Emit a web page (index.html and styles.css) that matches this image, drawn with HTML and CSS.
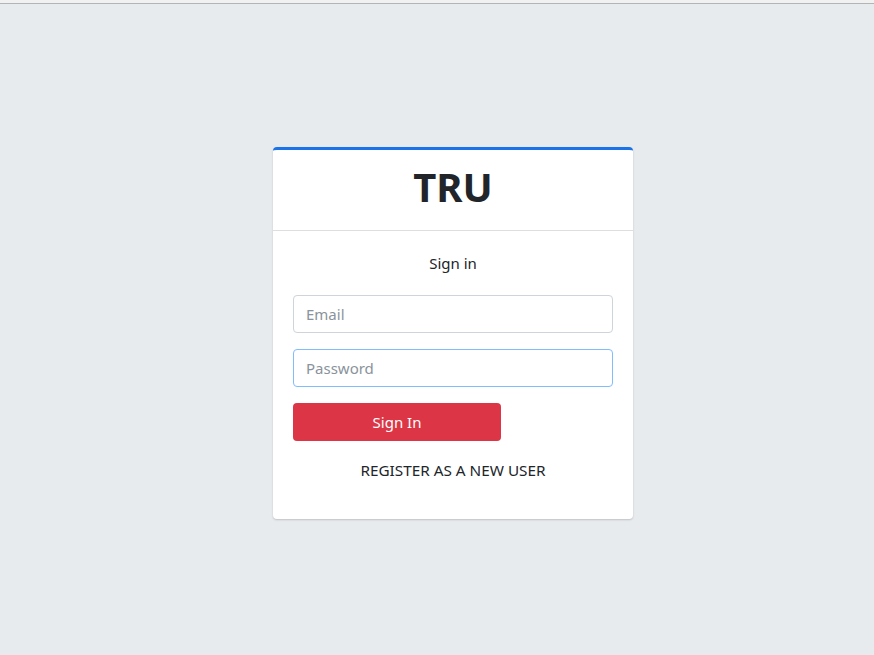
FILE: index.html
```html
<!DOCTYPE html>
<html>
<head>
<meta charset="utf-8">
<link rel="stylesheet" href="styles.css">
</head>
<body>
<div class="topbar"></div>
<main class="page">
  <div class="card">
    <div class="card-header"><h1 class="brand">TRU</h1></div>
    <div class="card-body">
      <p class="title">Sign in</p>
      <input class="field" type="text" placeholder="Email">
      <input class="field focus" type="password" placeholder="Password">
      <button class="btn">Sign In</button>
      <a class="register">REGISTER AS A NEW USER</a>
    </div>
  </div>
</main>
</body>
</html>
```
FILE: styles.css
```css
* { box-sizing: border-box; }
html, body { margin: 0; height: 100%; }
body {
  background: #e8ebee;
  font-family: "Noto Sans", "Open Sans", sans-serif;
  color: #212529;
}
.topbar {
  height: 4px;
  background: #f1f1f1;
  border-bottom: 1px solid #b4b4b4;
}
.page {
  display: flex;
  justify-content: center;
  padding-left: 32px;
  padding-top: 143px;
}
.card {
  width: 360px;
  background: #fff;
  border-top: 3px solid #1a73e8;
  border-radius: 4px;
  box-shadow: 0 1px 2px rgba(0,0,0,0.18);
}
.card-header {
  height: 81px;
  padding-bottom: 6px;
  border-bottom: 1px solid #dcdee0;
  display: flex;
  align-items: center;
  justify-content: center;
}
.brand {
  margin: 0;
  font-size: 40px;
  font-weight: 700;
  line-height: 1;
  color: #212529;
}
.card-body {
  padding: 20px 20px 37px;
  display: flex;
  flex-direction: column;
  align-items: flex-start;
}
.title {
  margin: 0 0 20px;
  width: 100%;
  text-align: center;
  font-size: 15px;
  line-height: 24px;
}
.field {
  width: 100%;
  height: 38px;
  border: 1px solid #ced4da;
  border-radius: 4px;
  padding: 0 12px;
  font-family: inherit;
  font-size: 15px;
  color: #495057;
  margin-bottom: 16px;
  outline: none;
}
.field::placeholder { color: #8a939b; }
.field.focus { border-color: #80bdff; }
.btn {
  width: 208px;
  height: 38px;
  border: none;
  border-radius: 4px;
  background: #dc3545;
  color: #fff;
  font-family: inherit;
  font-size: 15px;
  margin-bottom: 17px;
}
.register {
  width: 100%;
  text-align: center;
  font-size: 15.3px;
  line-height: 24px;
  color: #212529;
}
```
